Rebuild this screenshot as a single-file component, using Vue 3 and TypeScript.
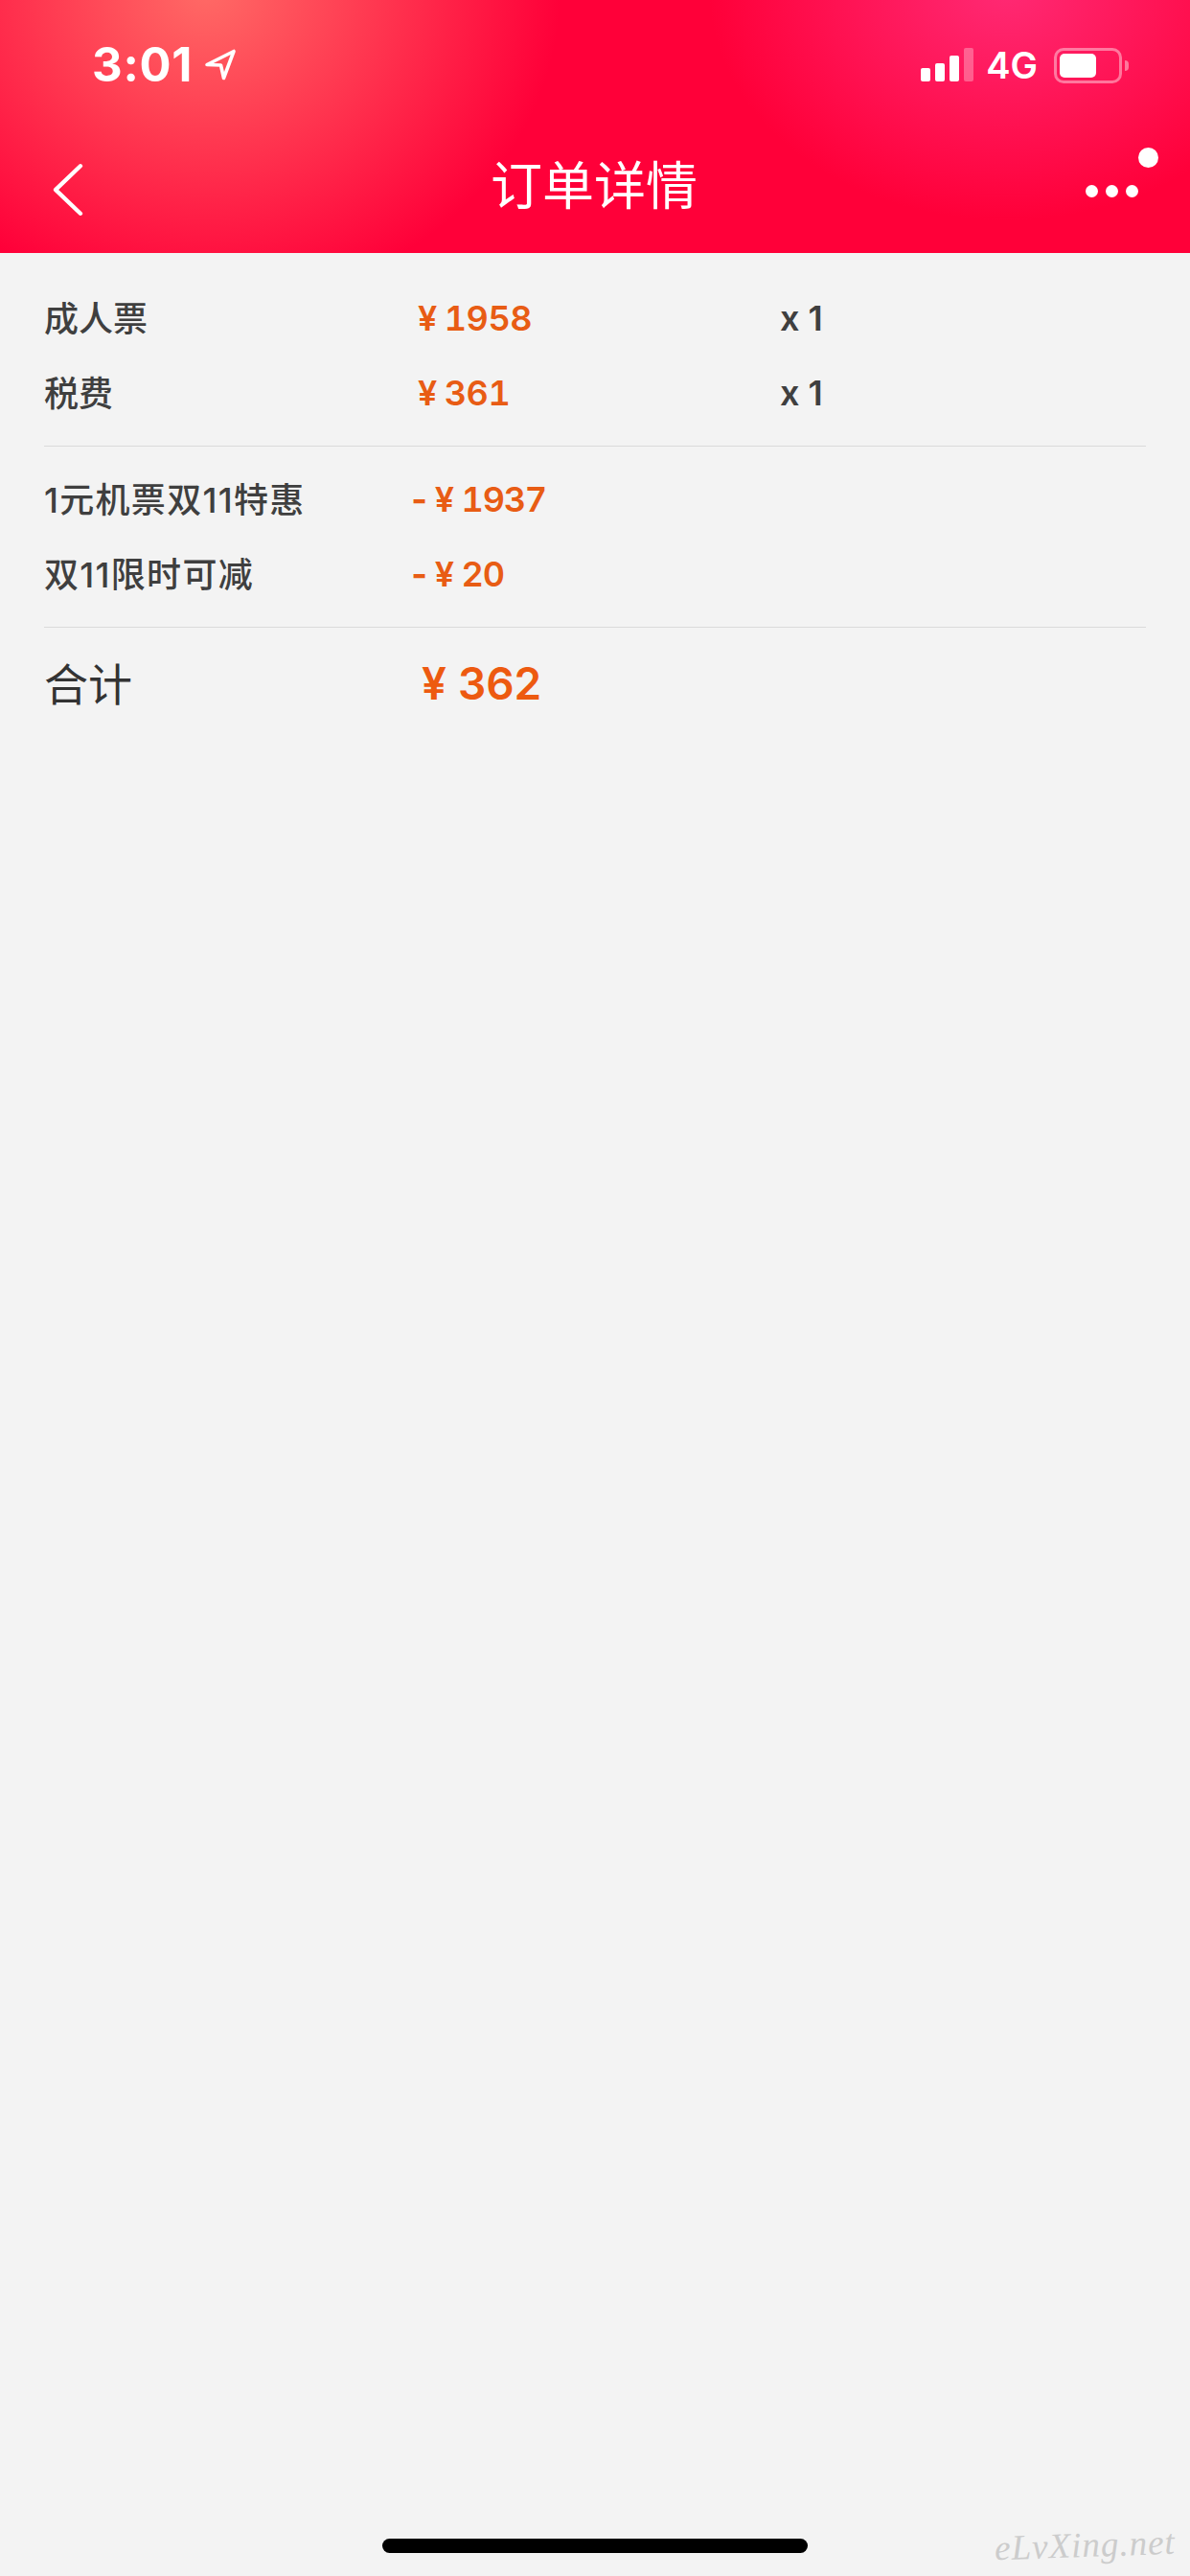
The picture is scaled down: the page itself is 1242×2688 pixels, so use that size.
<script setup lang="ts">
interface Row { label: string; sign?: string; price: string; qty?: string }
const fares: Row[] = [
  { label: '成人票', price: '1958', qty: 'x 1' },
  { label: '税费', price: '361', qty: 'x 1' },
]
const discounts: Row[] = [
  { label: '1元机票双11特惠', sign: '-', price: '1937' },
  { label: '双11限时可减', sign: '-', price: '20' },
]
</script>

<template>
  <div class="page">
    <header class="header">
      <div class="status">
        <div class="time-wrap">
          <span class="time">3:01</span>
          <svg class="loc" width="34" height="33" viewBox="0 0 34 33">
            <path d="M3 16.5 L31 2.5 L20.5 30.5 L17.5 17 Z" fill="none" stroke="#fff" stroke-width="3.6" stroke-linejoin="round" />
          </svg>
        </div>
        <div class="status-right">
          <div class="signal">
            <i class="bar b1"></i><i class="bar b2"></i><i class="bar b3"></i><i class="bar b4"></i>
          </div>
          <span class="net">4G</span>
          <div class="battery"><div class="level"></div></div>
          <div class="nub"></div>
        </div>
      </div>
      <nav class="nav">
        <svg class="back" width="34" height="60" viewBox="0 0 34 60">
          <path d="M30 3 L4 30 L30 57" fill="none" stroke="#fff" stroke-width="4.5" stroke-linecap="round" stroke-linejoin="round" />
        </svg>
        <h1 class="title">订单详情</h1>
        <div class="more">
          <i class="dot"></i><i class="dot"></i><i class="dot"></i>
          <i class="badge"></i>
        </div>
      </nav>
    </header>

    <main class="content">
      <section class="group">
        <div v-for="r in fares" :key="r.label" class="row">
          <span class="label">{{ r.label }}</span>
          <span class="price"><span class="yen">¥</span><span>{{ r.price }}</span></span>
          <span class="qty">{{ r.qty }}</span>
        </div>
      </section>
      <section class="group">
        <div v-for="r in discounts" :key="r.label" class="row">
          <span class="label spaced">{{ r.label }}</span>
          <span class="price disc"><span class="sign">{{ r.sign }}</span><span class="yen">¥</span><span class="amount">{{ r.price }}</span></span>
        </div>
      </section>
      <section class="total">
        <span class="total-label">合计</span>
        <span class="total-price"><span class="yen">¥</span><span>362</span></span>
      </section>
    </main>

    <div class="home"></div>
    <span class="watermark">eLvXing.net</span>
  </div>
</template>

<style>
html, body { margin: 0; background: #f3f3f3; }
</style>

<style scoped>
.page {
  position: relative;
  width: 1242px;
  height: 2688px;
  overflow: hidden;
  background: #f3f3f3;
  display: flex;
  flex-direction: column;
  font-family: Inter, "Noto Sans CJK SC", sans-serif;
}
.header {
  height: 264px;
  flex: none;
  display: flex;
  flex-direction: column;
  color: #fff;
  background:
    radial-gradient(ellipse 370px 330px at 215px -10px, rgba(255, 112, 104, .95), rgba(255, 100, 100, 0) 100%),
    radial-gradient(ellipse 310px 240px at 1050px -10px, rgba(255, 46, 122, .9), rgba(255, 46, 122, 0) 100%),
    #ff0039;
}
.status {
  height: 136px;
  flex: none;
  display: flex;
  justify-content: space-between;
  padding: 50px 64px 0 96px;
  box-sizing: border-box;
}
.time-wrap { display: flex; align-items: flex-start; gap: 12px; height: 36px; }
.time {
  font-size: 49px;
  font-weight: 700;
  line-height: 36px;
  letter-spacing: .75px;
}
.loc { margin-top: 1px; }
.status-right { display: flex; align-items: flex-start; height: 37px; }
.signal { display: flex; align-items: flex-end; gap: 5px; height: 35px; }
.bar { display: block; width: 10px; background: #fff; border-radius: 2px; }
.b1 { height: 14px; }
.b2 { height: 19px; }
.b3 { height: 27px; }
.b4 { height: 35px; background: rgba(255, 255, 255, .3); }
.net {
  margin-left: 13px;
  font-size: 38px;
  font-weight: 600;
  line-height: 36px;
  color: #fff;
}
.battery {
  margin-left: 17px;
  width: 71px;
  height: 37px;
  box-sizing: border-box;
  border: 3px solid rgba(255, 255, 255, .42);
  border-radius: 10px;
  padding: 3px;
}
.level { width: 38px; height: 25px; background: #fff; border-radius: 5px; }
.nub {
  margin: 13px 0 0 3px;
  width: 4px;
  height: 11px;
  border-radius: 0 4px 4px 0;
  background: rgba(255, 255, 255, .42);
}
.nav {
  flex: 1;
  position: relative;
  display: flex;
  align-items: center;
  justify-content: space-between;
  padding: 0 54px 4px 54px;
}
.back { flex: none; transform: scaleY(.92); }
.title {
  position: absolute;
  left: -2px;
  right: 0;
  top: 20px;
  margin: 0;
  text-align: center;
  font-size: 54px;
  line-height: 70px;
  font-weight: 400;
  font-family: "Noto Sans CJK SC", sans-serif;
  pointer-events: none;
}
.more { position: relative; display: flex; gap: 8px; margin-top: 2px; }
.dot { display: block; width: 13px; height: 13px; border-radius: 50%; background: #fff; }
.badge {
  position: absolute;
  right: -21px;
  top: -39px;
  width: 21px;
  height: 21px;
  border-radius: 50%;
  background: #fff;
}
.content { padding: 29px 46px 0; }
.group { padding-bottom: 16px; border-bottom: 1px solid #dadada; margin-bottom: 16px; }
.row {
  display: grid;
  grid-template-columns: 386px 382px auto;
  height: 78px;
  align-items: center;
}
.label {
  font-size: 36px;
  font-weight: 500;
  color: #3f3f3f;
  margin-top: -4px;
}
.spaced { letter-spacing: 1.3px; }
.price {
  display: flex;
  align-items: center;
  font-size: 36px;
  font-weight: 600;
  color: #e85c14;
  padding-left: 4px;
  font-feature-settings: "tnum" 1;
  letter-spacing: -.5px;
}
.disc { padding-left: 0; }
.sign { margin: 0 5px 0 -6px; font-weight: 700; }
.yen { margin-right: 8px; }
.amount { letter-spacing: -1.2px; }
.qty { font-size: 36px; font-weight: 600; color: #3f3f3f; }
.total {
  display: flex;
  align-items: center;
  height: 84px;
}
.total-label {
  width: 394px;
  font-size: 46px;
  font-weight: 400;
  color: #333;
  margin-top: -4px;
  font-family: "Noto Sans CJK SC", sans-serif;
}
.total-price {
  display: flex;
  align-items: center;
  font-size: 46px;
  font-weight: 600;
  color: #ed5a10;
}
.total-price .yen { margin-right: 12px; }
.home {
  position: absolute;
  left: 399px;
  top: 2649px;
  width: 444px;
  height: 15px;
  border-radius: 7.5px;
  background: #000;
}
.watermark {
  position: absolute;
  left: 1038px;
  top: 2634px;
  font-family: "Liberation Serif", serif;
  font-style: italic;
  font-size: 37px;
  letter-spacing: 1px;
  color: #cccccc;
  white-space: nowrap;
  transform: rotate(-2deg);
}
</style>
